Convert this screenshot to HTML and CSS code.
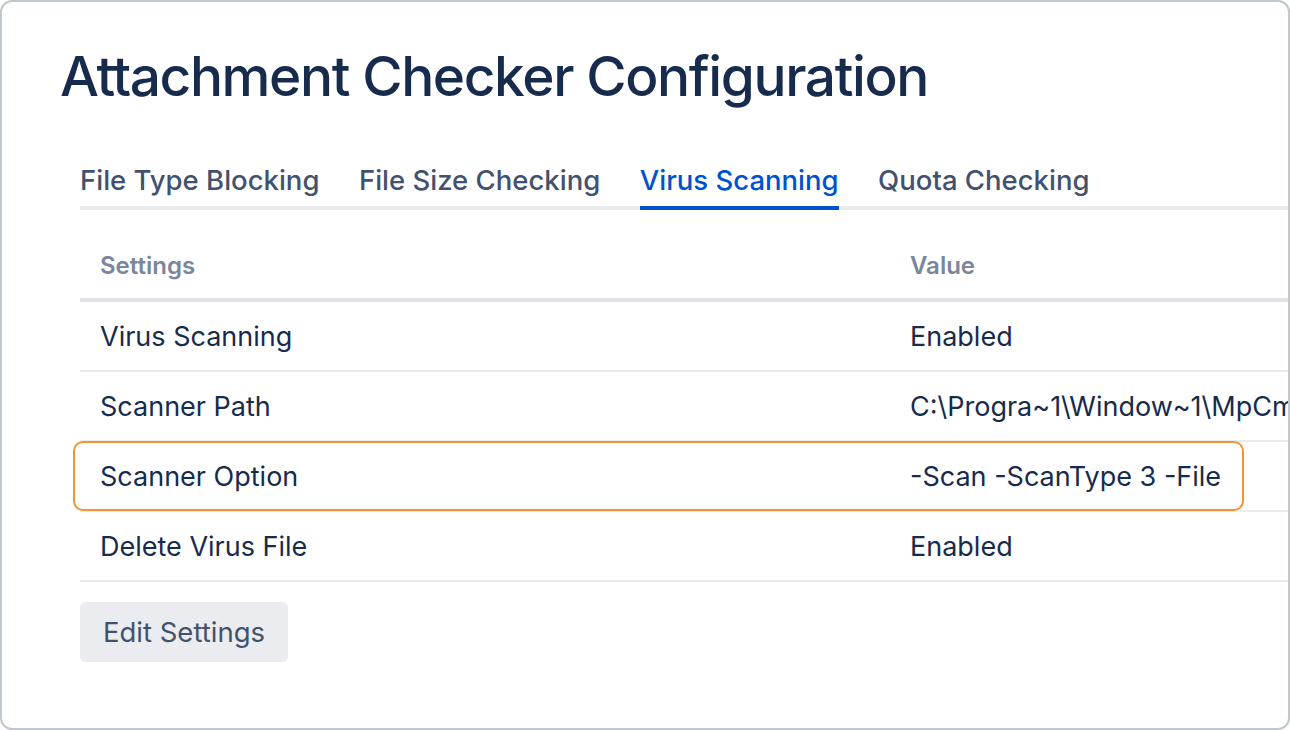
FILE: index.html
```html
<!DOCTYPE html>
<html>
<head>
<meta charset="utf-8">
<link rel="stylesheet" href="styles.css">
</head>
<body>
<div class="frame">
  <h1 class="title">Attachment Checker Configuration</h1>
  <div class="tabs">
    <span class="tab">File Type Blocking</span>
    <span class="tab">File Size Checking</span>
    <span class="tab active">Virus Scanning</span>
    <span class="tab">Quota Checking</span>
  </div>
  <div class="table">
    <div class="row head">
      <div class="c1">Settings</div>
      <div class="c2">Value</div>
    </div>
    <div class="row">
      <div class="c1">Virus Scanning</div>
      <div class="c2">Enabled</div>
    </div>
    <div class="row">
      <div class="c1">Scanner Path</div>
      <div class="c2">C:\Progra~1\Window~1\MpCmdRun.exe</div>
    </div>
    <div class="row hl">
      <div class="c1">Scanner Option</div>
      <div class="c2">-Scan -ScanType 3 -File</div>
      <div class="highlight"></div>
    </div>
    <div class="row">
      <div class="c1">Delete Virus File</div>
      <div class="c2">Enabled</div>
    </div>
  </div>
  <button class="btn">Edit Settings</button>
</div>
</body>
</html>
```

FILE: styles.css
```css
html, body {
  margin: 0;
  padding: 0;
  background: #ffffff;
}
.frame {
  box-sizing: border-box;
  width: 1290px;
  height: 730px;
  border: 2px solid #c1c7d0;
  border-radius: 12px;
  overflow: hidden;
  padding-left: 78px;
  font-family: Inter, "Noto Sans", sans-serif;
  color: #172b4d;
  position: relative;
}
.title {
  margin: 40px 0 0 -20px;
  font-size: 55px;
  font-weight: 500;
  line-height: 68px;
  color: #172b4d;
  letter-spacing: -1.4px;
  white-space: nowrap;
}
.tabs {
  margin-top: 50px;
  display: flex;
  gap: 39.5px;
  border-bottom: 4px solid #ebecf0;
  margin-right: -10px;
}
.tab {
  font-size: 27.5px;
  font-weight: 500;
  line-height: 40px;
  color: #42526e;
  padding-bottom: 6px;
  margin-bottom: -4px;
  border-bottom: 4px solid transparent;
  white-space: nowrap;
}
.tab.active {
  color: #0052cc;
  border-bottom-color: #0052cc;
}
.table {
  width: 1400px;
}
.row {
  display: flex;
  height: 68px;
  align-items: center;
  border-bottom: 2px solid #ebecf0;
  font-size: 27px;
  white-space: nowrap;
  position: relative;
}
.row.head {
  box-sizing: border-box;
  height: 92px;
  padding-top: 22px;
  border-bottom: 4px solid #dfe1e6;
  font-size: 24px;
  font-weight: 600;
  color: #7a869a;
}
.c1 {
  width: 810px;
  padding-left: 20px;
  box-sizing: border-box;
}
.c2 {
  padding-left: 20px;
}
.highlight {
  position: absolute;
  left: -7px;
  top: -1px;
  width: 1171px;
  height: 70px;
  box-sizing: border-box;
  border: 2px solid #f79232;
  border-radius: 10px;
}
.btn {
  display: block;
  margin-top: 20px;
  height: 60px;
  width: 208px;
  border: none;
  border-radius: 6px;
  background: #ebecf0;
  color: #42526e;
  font-family: Inter, "Noto Sans", sans-serif;
  font-size: 27.5px;
  padding: 0;
}
```
